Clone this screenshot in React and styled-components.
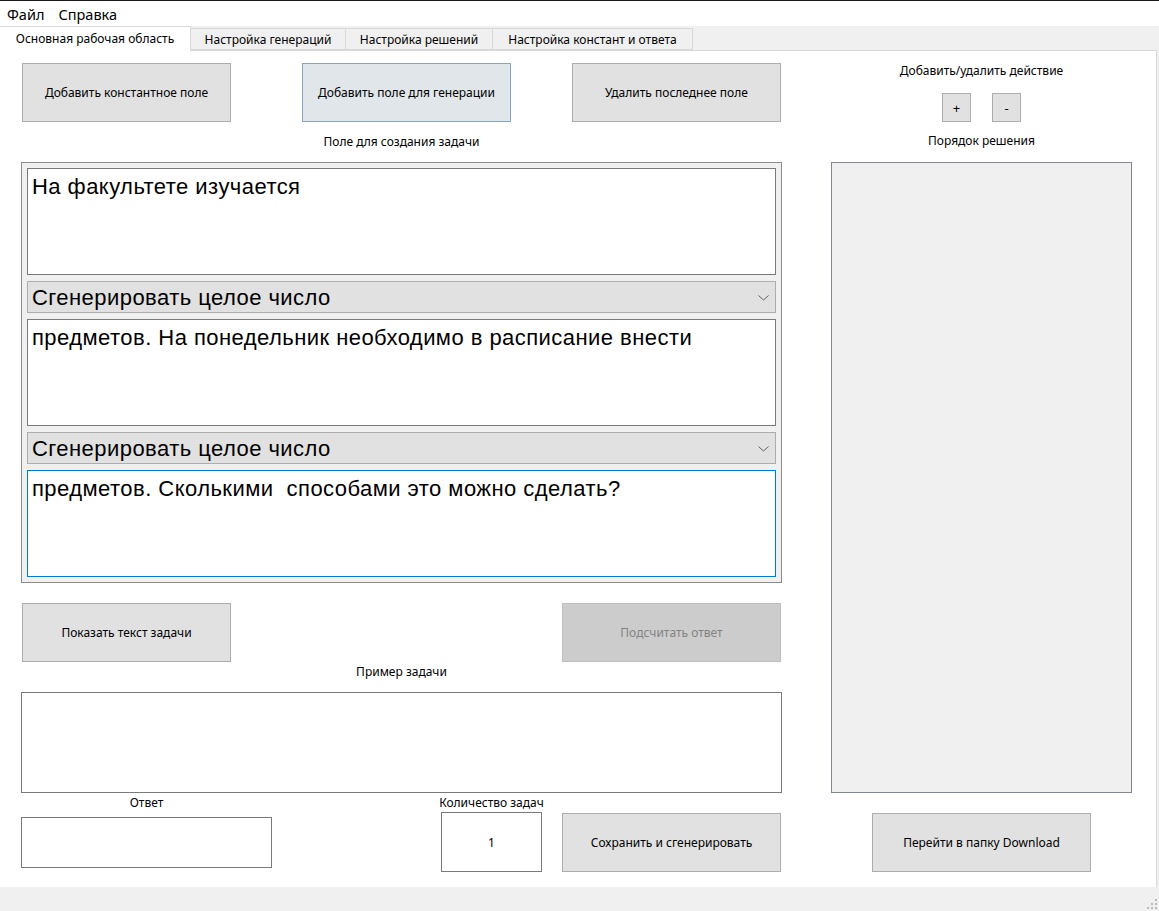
import React from 'react';
import styled, { createGlobalStyle } from 'styled-components';

const GlobalStyle = createGlobalStyle`
  html, body {
    margin: 0;
    padding: 0;
    background: #f0f0f0;
  }
  * {
    box-sizing: border-box;
  }
`;

const uiFont = `"Noto Sans", "Open Sans", sans-serif`;
const bigFont = `"Liberation Sans", Arial, sans-serif`;

const Window = styled.div`
  width: 1159px;
  height: 911px;
  display: flex;
  flex-direction: column;
  background: #f0f0f0;
  border-top: 1px solid #1a1a1a;
  font-family: ${uiFont};
  color: #000;
  overflow: hidden;
`;

const MenuBar = styled.div`
  height: 25px;
  flex-shrink: 0;
  background: #fff;
  display: flex;
  align-items: center;
  gap: 14px;
  padding-left: 7px;
  font-size: 14.5px;
`;

const MenuItem = styled.span`
  line-height: 20px;
`;

const TabStrip = styled.div`
  height: 24px;
  flex-shrink: 0;
  display: flex;
  align-items: flex-end;
  background: #f0f0f0;
`;

const Tab = styled.div`
  width: ${p => p.$w}px;
  height: ${p => (p.$active ? 25 : 22)}px;
  margin-bottom: ${p => (p.$active ? -1 : 0)}px;
  display: flex;
  align-items: center;
  justify-content: center;
  font-size: 12px;
  background: ${p => (p.$active ? '#fff' : '#f0f0f0')};
  border: 1px solid #d9d9d9;
  border-bottom: ${p => (p.$active ? 'none' : '1px solid #d9d9d9')};
  border-left: ${p => (p.$active ? 'none' : '1px solid #d9d9d9')};
  margin-left: ${p => (p.$first ? 0 : -1)}px;
  position: relative;
  z-index: ${p => (p.$active ? 1 : 0)};
  padding-bottom: ${p => (p.$active ? 2 : 0)}px;
`;

const TabPage = styled.div`
  width: 1157px;
  height: 837px;
  flex-shrink: 0;
  background: #fff;
  border-top: 1px solid #d9d9d9;
  border-right: 1px solid #d9d9d9;
  display: flex;
  gap: 49px;
  padding: 12px 0 0 21px;
`;

const LeftColumn = styled.div`
  width: 761px;
  display: flex;
  flex-direction: column;
`;

const RightColumn = styled.div`
  width: 301px;
  display: flex;
  flex-direction: column;
  align-items: center;
`;

const ButtonRow = styled.div`
  display: flex;
  height: 59px;
  padding-left: 1px;
  justify-content: ${p => p.$spread ? 'space-between' : 'flex-start'};
  padding-right: ${p => p.$spread ? 1 : 0}px;
  margin-top: ${p => p.$mt || 0}px;
`;

const Button = styled.button`
  width: ${p => p.$w || 209}px;
  height: ${p => p.$h || 59}px;
  margin-left: ${p => p.$ml || 0}px;
  margin-top: ${p => p.$mt || 0}px;
  flex-shrink: 0;
  padding: 0;
  font-family: ${uiFont};
  font-size: 12px;
  color: #000;
  background: #e1e1e1;
  border: 1px solid #adadad;
  border-radius: 0;
  cursor: default;

  &:disabled {
    background: #cccccc;
    border-color: #bfbfbf;
    color: #838383;
  }
`;

const FocusButton = styled(Button)`
  background: #e1e6eb;
  border-color: #8aa4bd;
`;

const SmallButton = styled(Button)`
  width: 29px;
  height: 29px;
  font-size: 13px;
`;

const Caption = styled.div`
  line-height: 16px;
  font-size: 12px;
  text-align: center;
  white-space: nowrap;
  margin-top: ${p => p.$mt || 0}px;
  margin-bottom: ${p => p.$mb || 0}px;
`;

const TaskPanel = styled.div`
  height: 421px;
  background: #f0f0f0;
  border: 1px solid #8c8c8c;
  padding: 5px;
  display: flex;
  flex-direction: column;
  gap: 6px;
`;

const TextArea = styled.div`
  height: 107px;
  background: #fff;
  border: 1px solid ${p => (p.$focused ? '#0078d7' : '#7a7a7a')};
  padding: 6px 4px 0;
  font-family: ${bigFont};
  font-size: 22px;
  letter-spacing: 0.45px;
  line-height: 24px;
  white-space: pre;
`;

const Combo = styled.div`
  height: 32px;
  background: #e1e1e1;
  border: 1px solid #adadad;
  padding: 4px 6px 0 4px;
  display: flex;
  justify-content: space-between;
  font-family: ${bigFont};
  font-size: 22px;
  letter-spacing: 0.45px;
  line-height: 24px;
`;

const Chevron = styled.svg`
  margin-top: 9px;
  flex-shrink: 0;
`;

const ExampleBox = styled.div`
  height: 101px;
  background: #fff;
  border: 1px solid #7a7a7a;
`;

const BottomRow = styled.div`
  display: flex;
  align-items: flex-start;
`;

const Field = styled.div`
  width: ${p => p.$w}px;
  margin-left: ${p => p.$ml || 0}px;
  display: flex;
  flex-direction: column;
  align-items: center;
  padding-top: 2px;
`;

const FieldBox = styled.div`
  width: 100%;
  height: ${p => p.$h}px;
  margin-top: ${p => p.$mt}px;
  background: #fff;
  border: 1px solid #7a7a7a;
  display: flex;
  align-items: center;
  justify-content: center;
  font-size: 12px;
`;

const PlusMinus = styled.div`
  display: flex;
  gap: 21px;
  margin-top: 14px;
`;

const SolutionList = styled.div`
  width: 301px;
  height: 631px;
  background: #f0f0f0;
  border: 1px solid #828790;
`;

const StatusStrip = styled.div`
  flex: 1;
  display: flex;
  justify-content: flex-end;
  align-items: flex-end;
  padding: 0 1px 1px 0;
`;

const Grip = () => (
  <svg width="12" height="12" viewBox="0 0 12 12">
    {[[8, 0], [4, 4], [8, 4], [0, 8], [4, 8], [8, 8]].map(([x, y]) => (
      <rect key={`${x}-${y}`} x={x + 1} y={y + 1} width="2" height="2" fill="#b9b9b9" />
    ))}
  </svg>
);

const ChevronDown = () => (
  <Chevron width="11" height="6" viewBox="0 0 11 6">
    <polyline points="0.5,0.5 5.5,5 10.5,0.5" fill="none" stroke="#606060" strokeWidth="1" />
  </Chevron>
);

const tabs = [
  { title: 'Основная рабочая область', w: 191 },
  { title: 'Настройка генераций', w: 156 },
  { title: 'Настройка решений', w: 148 },
  { title: 'Настройка констант и ответа', w: 201 },
];

const App = () => {
  return (
    <>
      <GlobalStyle />
      <Window>
        <MenuBar>
          <MenuItem>Файл</MenuItem>
          <MenuItem>Справка</MenuItem>
        </MenuBar>

        <TabStrip>
          {tabs.map((t, i) => (
            <Tab key={t.title} $w={t.w} $active={i === 0} $first={i === 0}>
              {t.title}
            </Tab>
          ))}
        </TabStrip>

        <TabPage>
          <LeftColumn>
            <ButtonRow>
              <Button>Добавить константное поле</Button>
              <FocusButton $ml={71}>Добавить поле для генерации</FocusButton>
              <Button $ml={61}>Удалить последнее поле</Button>
            </ButtonRow>

            <Caption $mt={12} $mb={12}>Поле для создания задачи</Caption>

            <TaskPanel>
              <TextArea>На факультете изучается</TextArea>
              <Combo>
                <span>Сгенерировать целое число</span>
                <ChevronDown />
              </Combo>
              <TextArea>предметов. На понедельник необходимо в расписание внести</TextArea>
              <Combo>
                <span>Сгенерировать целое число</span>
                <ChevronDown />
              </Combo>
              <TextArea $focused>предметов. Сколькими  способами это можно сделать?</TextArea>
            </TaskPanel>

            <ButtonRow $spread $mt={20}>
              <Button>Показать текст задачи</Button>
              <Button $w={219} disabled>Подсчитать ответ</Button>
            </ButtonRow>

            <Caption $mt={2} $mb={12}>Пример задачи</Caption>

            <ExampleBox />

            <BottomRow>
              <Field $w={251}>
                <Caption>Ответ</Caption>
                <FieldBox $h={51} $mt={6} />
              </Field>
              <Field $w={101} $ml={169}>
                <Caption>Количество задач</Caption>
                <FieldBox $h={60} $mt={1}>1</FieldBox>
              </Field>
              <Button $w={219} $ml={20} $mt={20}>Сохранить и сгенерировать</Button>
            </BottomRow>
          </LeftColumn>

          <RightColumn>
            <Caption>Добавить/удалить действие</Caption>
            <PlusMinus>
              <SmallButton>+</SmallButton>
              <SmallButton>-</SmallButton>
            </PlusMinus>
            <Caption $mt={11} $mb={13}>Порядок решения</Caption>
            <SolutionList />
            <Button $w={219} $mt={20}>Перейти в папку Download</Button>
          </RightColumn>
        </TabPage>

        <StatusStrip>
          <Grip />
        </StatusStrip>
      </Window>
    </>
  );
};

export default App;
